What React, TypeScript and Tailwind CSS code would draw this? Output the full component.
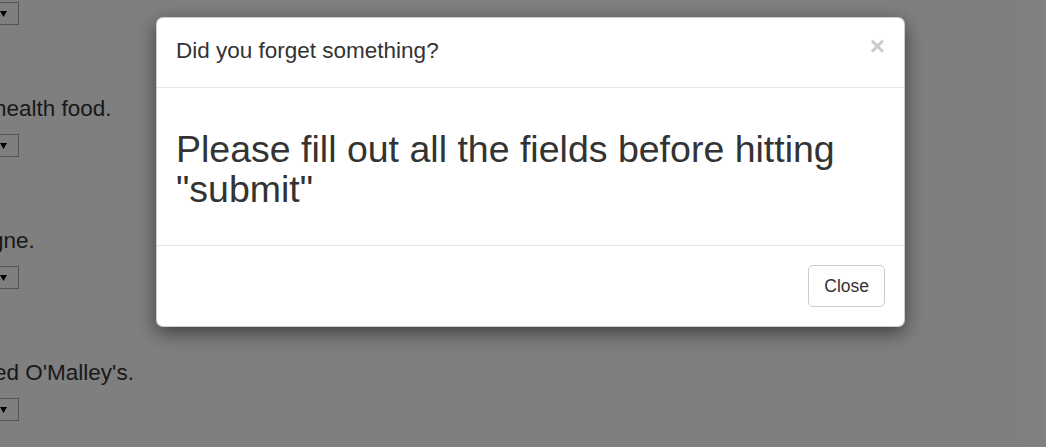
import { useState } from "react";

type Row = {
  text: string;
  offset: string;
};

// fragments of the quiz page that peek out behind the backdrop
const rows: Row[] = [
  { text: "health food.", offset: "-ml-[6px]" },
  { text: "gne.", offset: "-ml-[9px]" },
  { text: "ed O'Malley's.", offset: "-ml-[6px]" },
];

function FakeSelect({ className = "" }: { className?: string }) {
  return (
    <div
      className={`-ml-[41px] flex h-[23px] w-[60px] items-center justify-end border border-[#a6a6a6] bg-white pr-[11px] ${className}`}
    >
      <svg width="7" height="6" viewBox="0 0 7 6" aria-hidden="true">
        <polygon points="0,0 7,0 3.5,6" fill="#000" />
      </svg>
    </div>
  );
}

export default function App() {
  const [open, setOpen] = useState(true);

  return (
    <div className="relative h-[447px] w-full overflow-hidden bg-white font-['Liberation_Sans',Arial,sans-serif] text-[#333]">
      <main className="flex flex-col items-start pt-[2px]">
        <FakeSelect />
        {rows.map((row) => (
          <div key={row.text} className="flex flex-col items-start">
            <p className={`mt-[68px] whitespace-nowrap text-[22.5px] leading-[32px] ${row.offset}`}>
              {row.text}
            </p>
            <FakeSelect className="mt-[9px]" />
          </div>
        ))}
      </main>

      {open && (
        <>
          <div className="absolute inset-0 bg-black/50" />
          <div
            role="dialog"
            className="absolute left-[156px] top-[17px] w-[749px] rounded-[7px] border border-black/20 bg-white shadow-[0_6px_19px_rgba(0,0,0,0.5)]"
          >
            <div className="flex items-start justify-between border-b border-[#e5e5e5] px-[19px] pb-[20px] pt-[17px]">
              <h4 className="text-[22.5px] leading-[32px]">Did you forget something?</h4>
              <button
                onClick={() => setOpen(false)}
                className="-mt-[2px] text-[26px] font-bold leading-none text-black opacity-20"
              >
                ×
              </button>
            </div>

            <div className="px-[19px] pb-[36px] pt-[41px]">
              <h2 className="text-[37.5px] leading-[40px]">
                Please fill out all the fields before hitting "submit"
              </h2>
            </div>

            <div className="flex justify-end border-t border-[#e5e5e5] p-[19px]">
              <button
                onClick={() => setOpen(false)}
                className="rounded-[5px] border border-[#ccc] bg-white px-[15px] py-[7.5px] text-[17.5px] leading-[25px] text-[#333]"
              >
                Close
              </button>
            </div>
          </div>
        </>
      )}
    </div>
  );
}
